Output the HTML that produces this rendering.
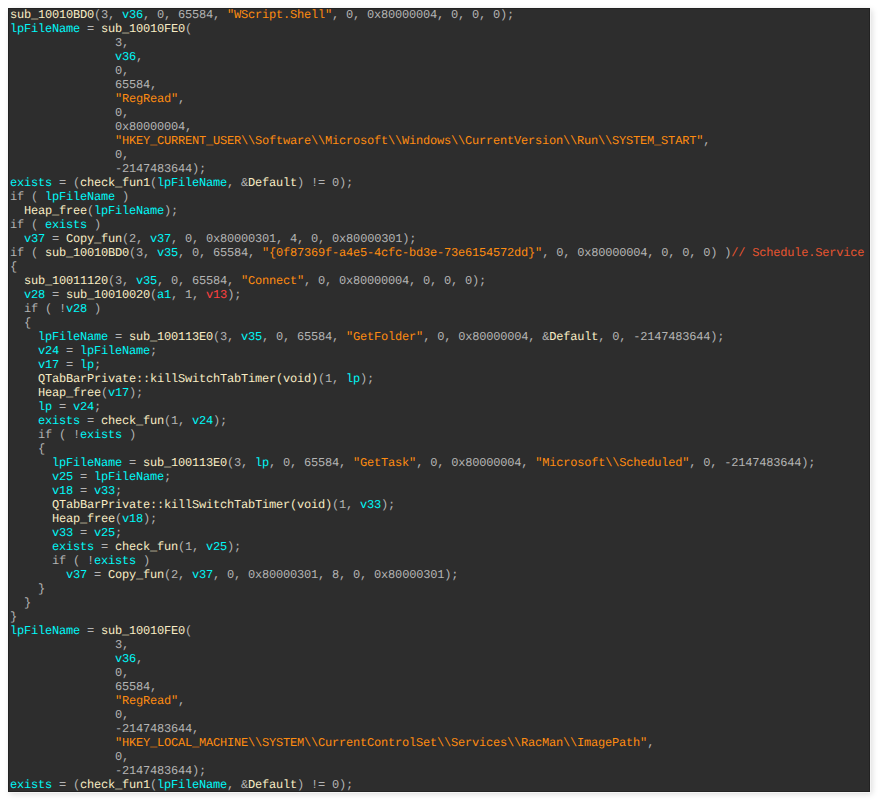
<!DOCTYPE html>
<html><head><meta charset="utf-8"><style>
html,body{margin:0;padding:0;background:#fff;width:878px;height:800px;overflow:hidden;}
#shadow{position:absolute;left:8px;top:8px;width:862px;height:784px;box-shadow:1px 1px 0 #f4f4f4, 2px 2px 6px rgba(0,0,0,0.15);}
#panel{position:absolute;left:8px;top:8px;width:862px;height:784px;background:#2d2d2d;box-sizing:border-box;border:1px solid #222222;overflow:hidden;}
pre{position:absolute;left:1px;top:-1px;margin:0;font-family:"Liberation Mono",monospace;font-size:12px;letter-spacing:-0.2px;line-height:14px;color:#b4b4b4;text-rendering:geometricPrecision;}
.f{color:#f8ecc4}.v{color:#00f8f8}.s{color:#ff8c10}.r{color:#ff4040}.c{color:#e85530}
</style></head><body><div id="shadow"></div><div id="panel"><pre><span class="f">sub_10010BD0</span>(3, <span class="v">v36</span>, 0, 65584, <span class="s">&quot;WScript.Shell&quot;</span>, 0, 0x80000004, 0, 0, 0);
<span class="v">lpFileName</span> = <span class="f">sub_10010FE0</span>(
               3,
               <span class="v">v36</span>,
               0,
               65584,
               <span class="s">&quot;RegRead&quot;</span>,
               0,
               0x80000004,
               <span class="s">&quot;HKEY_CURRENT_USER\\Software\\Microsoft\\Windows\\CurrentVersion\\Run\\SYSTEM_START&quot;</span>,
               0,
               -2147483644);
<span class="v">exists</span> = (<span class="f">check_fun1</span>(<span class="v">lpFileName</span>, &amp;<span class="f">Default</span>) != 0);
if ( <span class="v">lpFileName</span> )
  <span class="f">Heap_free</span>(<span class="v">lpFileName</span>);
if ( <span class="v">exists</span> )
  <span class="v">v37</span> = <span class="f">Copy_fun</span>(2, <span class="v">v37</span>, 0, 0x80000301, 4, 0, 0x80000301);
if ( <span class="f">sub_10010BD0</span>(3, <span class="v">v35</span>, 0, 65584, <span class="s">&quot;{0f87369f-a4e5-4cfc-bd3e-73e6154572dd}&quot;</span>, 0, 0x80000004, 0, 0, 0) )<span class="c">// Schedule.Service</span>
{
  <span class="f">sub_10011120</span>(3, <span class="v">v35</span>, 0, 65584, <span class="s">&quot;Connect&quot;</span>, 0, 0x80000004, 0, 0, 0);
  <span class="v">v28</span> = <span class="f">sub_10010020</span>(<span class="v">a1</span>, 1, <span class="r">v13</span>);
  if ( !<span class="v">v28</span> )
  {
    <span class="v">lpFileName</span> = <span class="f">sub_100113E0</span>(3, <span class="v">v35</span>, 0, 65584, <span class="s">&quot;GetFolder&quot;</span>, 0, 0x80000004, &amp;<span class="f">Default</span>, 0, -2147483644);
    <span class="v">v24</span> = <span class="v">lpFileName</span>;
    <span class="v">v17</span> = <span class="v">lp</span>;
    <span class="f">QTabBarPrivate::killSwitchTabTimer(void)</span>(1, <span class="v">lp</span>);
    <span class="f">Heap_free</span>(<span class="v">v17</span>);
    <span class="v">lp</span> = <span class="v">v24</span>;
    <span class="v">exists</span> = <span class="f">check_fun</span>(1, <span class="v">v24</span>);
    if ( !<span class="v">exists</span> )
    {
      <span class="v">lpFileName</span> = <span class="f">sub_100113E0</span>(3, <span class="v">lp</span>, 0, 65584, <span class="s">&quot;GetTask&quot;</span>, 0, 0x80000004, <span class="s">&quot;Microsoft\\Scheduled&quot;</span>, 0, -2147483644);
      <span class="v">v25</span> = <span class="v">lpFileName</span>;
      <span class="v">v18</span> = <span class="v">v33</span>;
      <span class="f">QTabBarPrivate::killSwitchTabTimer(void)</span>(1, <span class="v">v33</span>);
      <span class="f">Heap_free</span>(<span class="v">v18</span>);
      <span class="v">v33</span> = <span class="v">v25</span>;
      <span class="v">exists</span> = <span class="f">check_fun</span>(1, <span class="v">v25</span>);
      if ( !<span class="v">exists</span> )
        <span class="v">v37</span> = <span class="f">Copy_fun</span>(2, <span class="v">v37</span>, 0, 0x80000301, 8, 0, 0x80000301);
    }
  }
}
<span class="v">lpFileName</span> = <span class="f">sub_10010FE0</span>(
               3,
               <span class="v">v36</span>,
               0,
               65584,
               <span class="s">&quot;RegRead&quot;</span>,
               0,
               -2147483644,
               <span class="s">&quot;HKEY_LOCAL_MACHINE\\SYSTEM\\CurrentControlSet\\Services\\RacMan\\ImagePath&quot;</span>,
               0,
               -2147483644);
<span class="v">exists</span> = (<span class="f">check_fun1</span>(<span class="v">lpFileName</span>, &amp;<span class="f">Default</span>) != 0);</pre></div></body></html>
